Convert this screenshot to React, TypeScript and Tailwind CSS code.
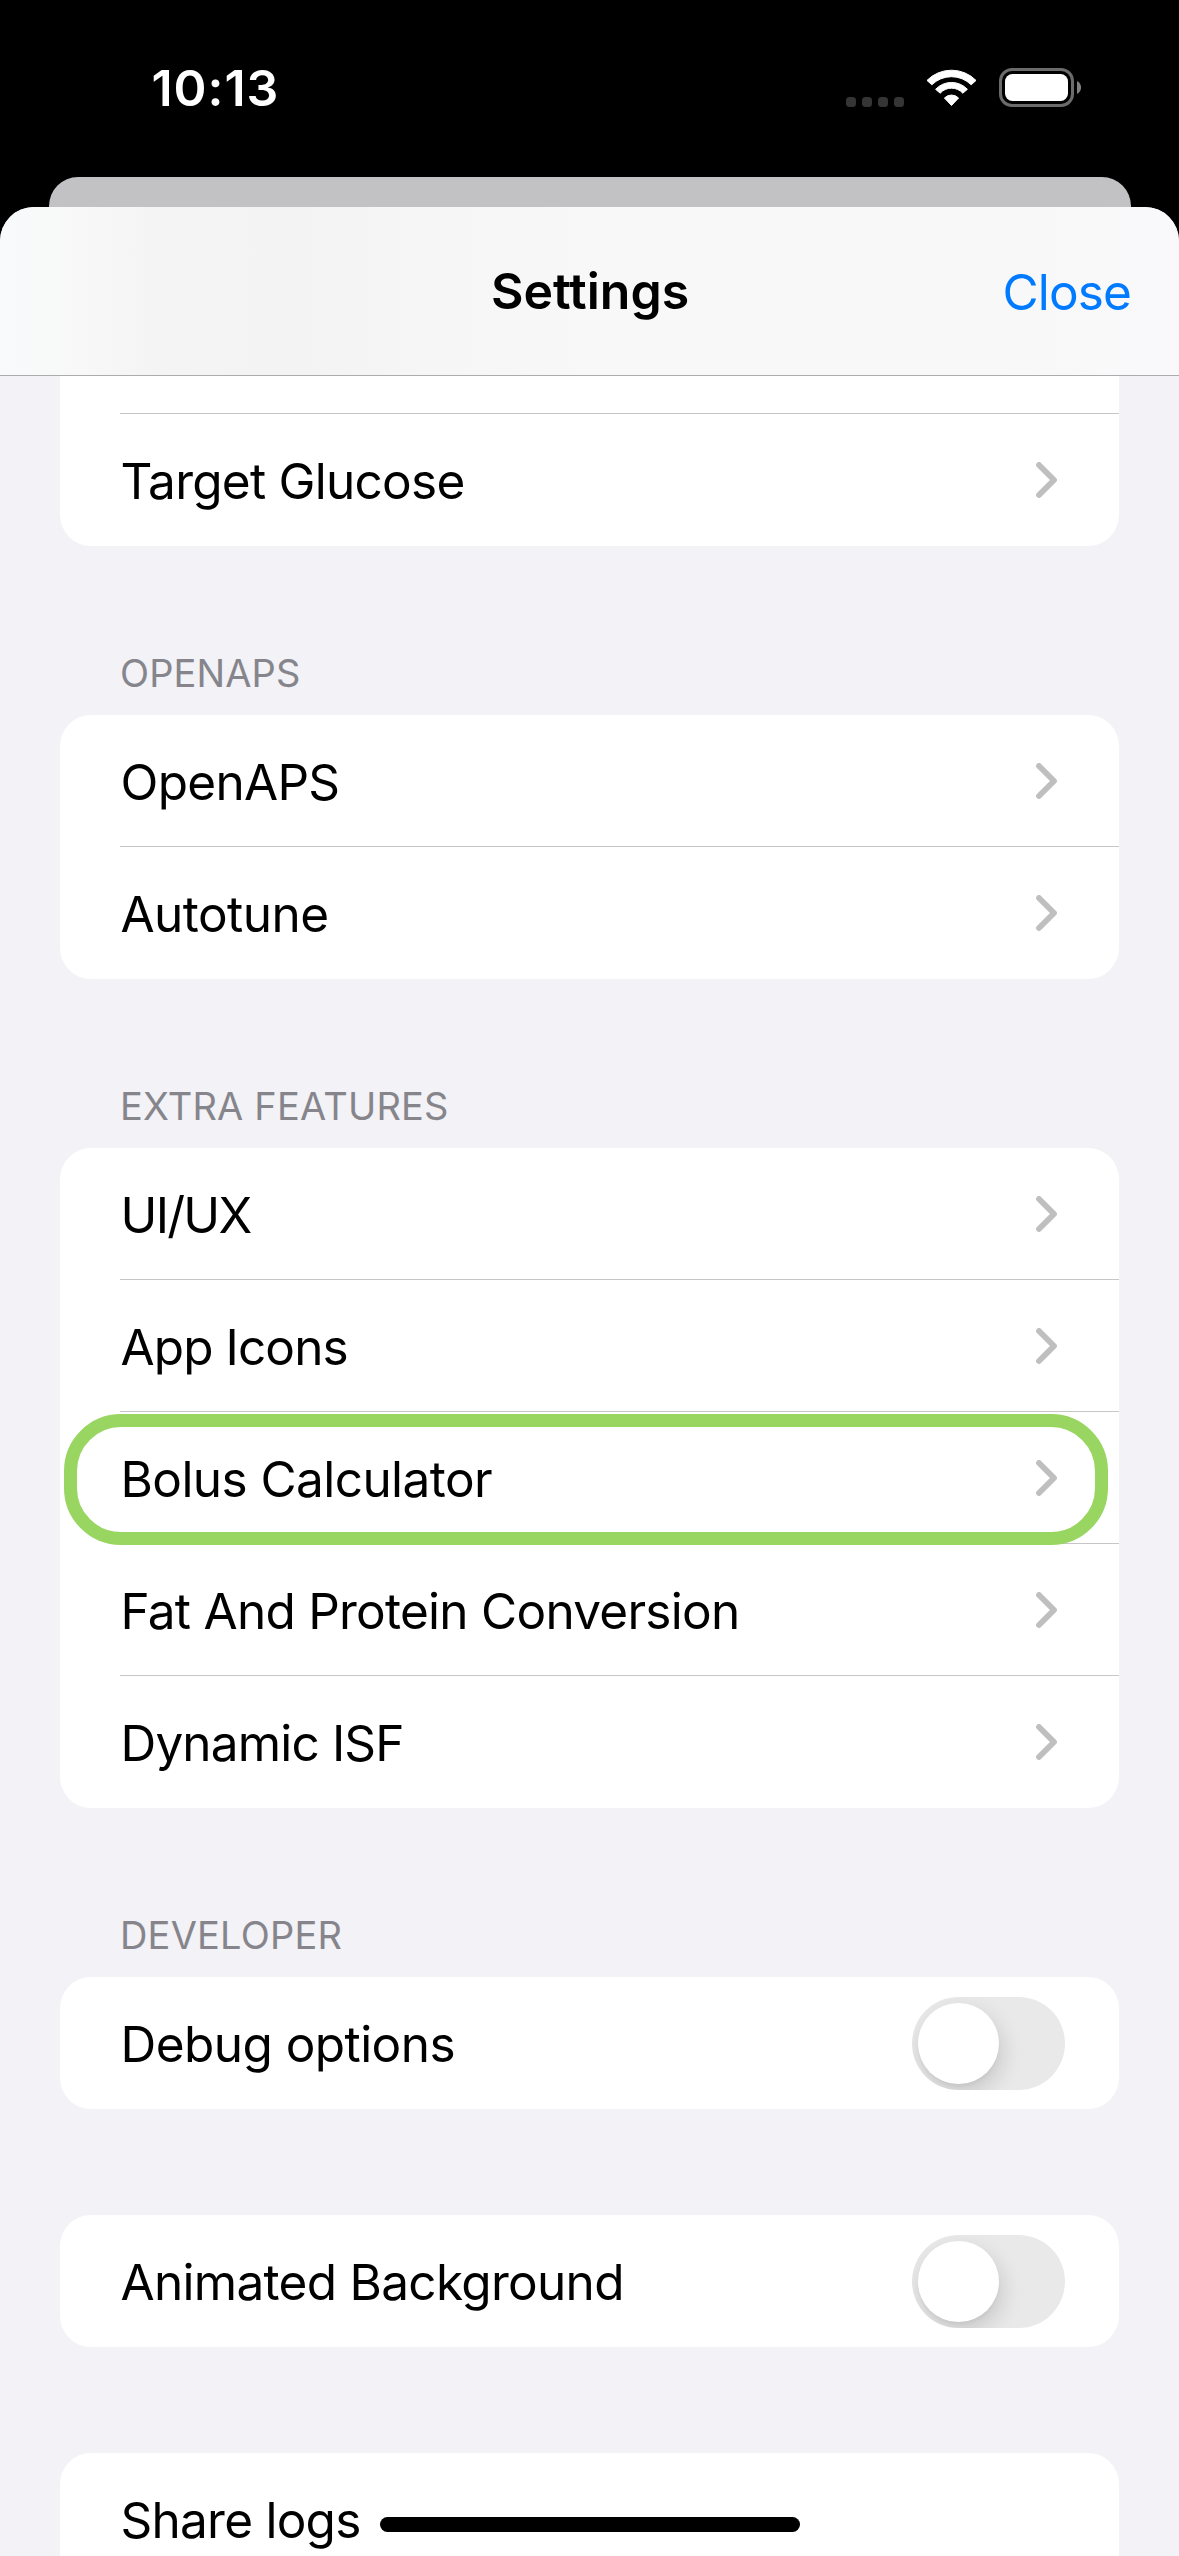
import type { ReactNode } from "react";

function Chevron() {
  return (
    <svg width="21" height="36" viewBox="0 0 21 36" fill="none" className="mr-[62px] shrink-0">
      <path d="M3 3 L18 18 L3 33" stroke="#bfbfbf" strokeWidth="5.8" strokeLinecap="round" strokeLinejoin="round" />
    </svg>
  );
}

function Toggle() {
  return (
    <div className="mt-px mr-[54px] h-[93px] w-[153px] shrink-0 overflow-hidden rounded-full bg-[#e9e9ea] p-1.5">
      <div className="size-[81px] rounded-full bg-white shadow-[3px_9px_22px_rgba(0,0,0,0.15),0_3px_3px_rgba(0,0,0,0.03)]" />
    </div>
  );
}

type RowProps = {
  label: string;
  tracking: string;
  control?: ReactNode;
  last?: boolean;
  highlighted?: boolean;
};

function Row({ label, tracking, control, last, highlighted }: RowProps) {
  return (
    <div className="relative h-[132px] pl-[60px]">
      <div
        className={
          "flex h-full items-center justify-between border-b " +
          (last ? "border-transparent" : "border-[#c6c6c8]")
        }
      >
        <span className={"mt-[5px] ml-[0.5px] text-[49.5px] leading-none whitespace-nowrap " + tracking}>{label}</span>
        {control}
      </div>
      {highlighted && (
        <div className="absolute top-[2.4px] left-[3.7px] z-10 h-[131px] w-[1044.3px] rounded-[57px] border-[13px] border-[#98d561]" />
      )}
    </div>
  );
}

function Card({ children }: { children: ReactNode }) {
  return <div className="mx-[60px] rounded-[31px] bg-white">{children}</div>;
}

function SectionTitle({ children, tracking }: { children: string; tracking: string }) {
  return (
    <h2 className={"mt-[103px] mb-[18px] ml-[120px] h-12 text-[38px] leading-[48px] text-[#86858b] " + tracking}>
      {children}
    </h2>
  );
}

function StatusIcons() {
  return (
    <div className="flex items-center">
      <div className="mt-[27px] flex gap-1.5">
        {[0, 1, 2, 3].map((i) => (
          <div key={i} className="h-2.5 w-2.5 rounded-[3.5px] bg-[#353535]" />
        ))}
      </div>
      <svg width="53" height="40" viewBox="0 0 53 40" className="ml-[21px]" fill="#fff" stroke="#fff" strokeWidth="1" strokeLinejoin="round">
        <path d="M2 12.4 A34.5 34.5 0 0 1 51 12.4 L46.2 16.8 A28 28 0 0 0 6.8 16.8 Z" />
        <path d="M10.6 21.3 A21.8 21.8 0 0 1 42.4 21.3 L37.8 25.2 A15.2 15.2 0 0 0 15.2 25.2 Z" />
        <path d="M19.4 30 A10 10 0 0 1 33.6 30 L26.5 37.5 Z" />
      </svg>
      <svg width="83" height="40" viewBox="0 0 83 40" className="ml-[21px]">
        <rect x="1.5" y="1.5" width="72" height="36" rx="11.5" fill="none" stroke="#6b6b6b" strokeWidth="3" />
        <rect x="6" y="6" width="63" height="27" rx="7.5" fill="#fff" />
        <path d="M78 13 C83.4 15.6 83.4 23.4 78 26 Z" fill="#808080" />
      </svg>
    </div>
  );
}

export default function App() {
  return (
    <div className="flex h-[2556px] w-[1179px] flex-col overflow-hidden bg-black font-['Inter',sans-serif] text-black">
      <header className="flex h-[177px] items-center justify-between pr-[97px] pb-px pl-[151.5px]">
        <span className="mb-px text-[50px] leading-none font-semibold tracking-[0.95px] text-white">10:13</span>
        <StatusIcons />
      </header>

      <div className="mx-[48.5px] h-[30px] shrink-0 rounded-t-[29px] bg-[#c2c2c4]" />

      <main className="relative flex min-h-0 flex-1 flex-col overflow-hidden rounded-t-[34px] bg-[#f2f2f7]">
        <nav className="grid h-[169px] shrink-0 grid-cols-3 items-center border-b border-[#acacae] bg-[linear-gradient(90deg,#f9fafb_0%,#f7f8f7_7%,#f4f4f4_13%,#f3f3f3_25%,#f6f6f6_37%,#f8f8f8_50%,#f8f8f8_85%,#f9f9fb_100%)] px-12">
          <span />
          <h1 className="ml-px text-center text-[50px] leading-none font-semibold">Settings</h1>
          <a className="mt-1 text-right text-[49.5px] leading-none tracking-[-0.88px] text-[#007aff]">Close</a>
        </nav>

        <div className="mx-[60px] h-[38px] shrink-0 bg-white pl-[60px]">
          <div className="h-full border-b border-[#c6c6c8]" />
        </div>
        <div className="mx-[60px] rounded-b-[31px] bg-white">
          <Row label="Target Glucose" tracking="tracking-[-0.74px]" control={<Chevron />} last />
        </div>

        <SectionTitle tracking="tracking-[0.12px]">OPENAPS</SectionTitle>
        <Card>
          <Row label="OpenAPS" tracking="tracking-[-0.7px]" control={<Chevron />} />
          <Row label="Autotune" tracking="tracking-[-0.55px]" control={<Chevron />} last />
        </Card>

        <SectionTitle tracking="tracking-[0.2px]">EXTRA FEATURES</SectionTitle>
        <Card>
          <Row label="UI/UX" tracking="tracking-[-1.7px]" control={<Chevron />} />
          <Row label="App Icons" tracking="tracking-[-0.9px]" control={<Chevron />} />
          <Row label="Bolus Calculator" tracking="tracking-[-0.57px]" control={<Chevron />} highlighted />
          <Row label="Fat And Protein Conversion" tracking="tracking-[-0.74px]" control={<Chevron />} />
          <Row label="Dynamic ISF" tracking="tracking-[-0.84px]" control={<Chevron />} last />
        </Card>

        <SectionTitle tracking="tracking-[0.2px]">DEVELOPER</SectionTitle>
        <Card>
          <Row label="Debug options" tracking="tracking-[-0.55px]" control={<Toggle />} last />
        </Card>

        <div className="h-[106px] shrink-0" />
        <Card>
          <Row label="Animated Background" tracking="tracking-[-0.7px]" control={<Toggle />} last />
        </Card>

        <div className="h-[106px] shrink-0" />
        <Card>
          <Row label="Share logs" tracking="tracking-[-0.75px]" last />
        </Card>

        <div className="absolute bottom-6 left-[380px] h-[15px] w-[420px] rounded-full bg-black" />
      </main>
    </div>
  );
}
